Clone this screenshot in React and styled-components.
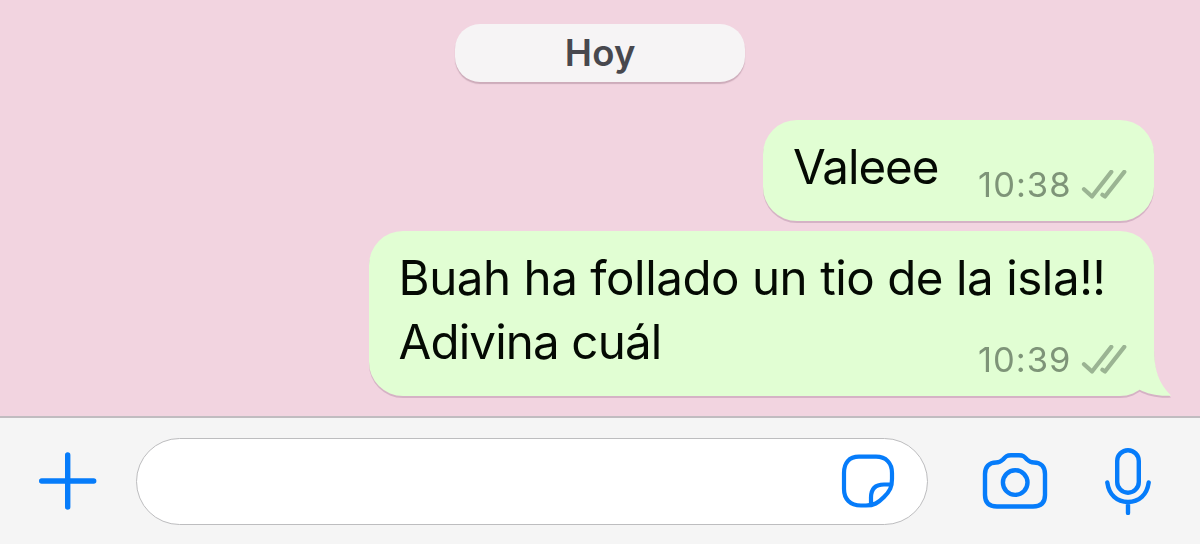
import React from "react";
import styled, { createGlobalStyle } from "styled-components";

const GlobalStyle = createGlobalStyle`
  * { box-sizing: border-box; }
  body { margin: 0; }
`;

const Screen = styled.div`
  width: 1200px;
  height: 544px;
  display: flex;
  flex-direction: column;
  overflow: hidden;
  background: #f2d4e0;
  font-family: Inter, "Liberation Sans", sans-serif;
`;

const Messages = styled.main`
  flex: 1;
  display: flex;
  flex-direction: column;
  align-items: flex-end;
  padding: 24px 46px 0 0;
`;

const DayPill = styled.div`
  align-self: center;
  width: 290px;
  height: 58px;
  margin: 0 -46.5px 38px 0;
  border-radius: 25px;
  background: #f6f4f5;
  box-shadow: 0 2px 1px rgba(120, 80, 100, 0.3);
  color: #48484e;
  font-size: 36.5px;
  font-weight: 600;
  line-height: 59px;
  letter-spacing: 0.2px;
  text-align: center;
`;

const Bubble = styled.article`
  position: relative;
  display: flex;
  align-items: flex-end;
  justify-content: space-between;
  width: ${(p) => p.$width}px;
  height: ${(p) => p.$height}px;
  margin-bottom: 10px;
  padding: 0 27.5px 0 30px;
  border-radius: 34px;
  background: #e1fed3;
  filter: drop-shadow(0 2px 0.7px rgba(130, 80, 120, 0.26));
`;

const Text = styled.p`
  align-self: flex-start;
  margin: 15px 0 0;
  color: #040a03;
  font-size: 47.5px;
  line-height: 64px;
  white-space: nowrap;
`;

const Line = styled.span`
  display: block;
  letter-spacing: ${(p) => p.$tracking}px;
`;

const Meta = styled.div`
  display: flex;
  align-items: center;
  gap: 9px;
  margin: 0 0 14px ${(p) => p.$pull || 0}px;
  color: #7e9478;
  font-size: 34.5px;
  line-height: 44px;
  letter-spacing: 1px;
`;

const Tail = styled.svg`
  position: absolute;
  right: -17px;
  bottom: 0;
`;

const Toolbar = styled.footer`
  display: flex;
  align-items: center;
  height: 128px;
  padding: 0 47px 0 38px;
  border-top: 2px solid #c1bcc0;
  background: #f5f5f5;
`;

const Field = styled.div`
  display: flex;
  align-items: center;
  justify-content: flex-end;
  width: 792px;
  height: 87px;
  margin: 0 54px 0 38px;
  padding-right: 32px;
  border: 1px solid #bdbdbf;
  border-radius: 44px;
  background: #fff;
`;

const Icon = styled.svg`
  display: block;
  flex: none;
  fill: none;
  stroke: #067cfa;
  stroke-width: ${(p) => p.$stroke || 5};
  stroke-linecap: round;
  stroke-linejoin: round;
`;

const CameraSlot = styled.div`
  margin-right: 56px;
`;

function Checks() {
  return (
    <svg width="46" height="30" viewBox="0 0 46 30" fill="none" stroke="#9bb493" strokeWidth="4.2" strokeLinecap="round" strokeLinejoin="round">
      <path d="M3 19.2 11 26.5 30.3 1.9M21.4 24.8 24 26.5 43.3 1.9" />
    </svg>
  );
}

export default function App() {
  return (
    <>
      <GlobalStyle />
      <Screen>
        <Messages>
          <DayPill>Hoy</DayPill>
          <Bubble $width={391} $height={101}>
            <Text><Line $tracking={-1.05}>Valeee</Line></Text>
            <Meta><span>10:38</span><Checks /></Meta>
          </Bubble>
          <Bubble $width={785.5} $height={165}>
            <Text>
              <Line $tracking={-0.45}>Buah ha follado un tio de la isla!!</Line>
              <Line $tracking={-0.85}>Adivina cuál</Line>
            </Text>
            <Meta $pull={-200}><span>10:39</span><Checks /></Meta>
            <Tail width="34" height="48" viewBox="0 0 34 48">
              <path d="M0 8 17 0C17 22 22 36 34 47.6 22 48.5 10 46 2.5 41.5Z" fill="#e1fed3" />
            </Tail>
          </Bubble>
        </Messages>
        <Toolbar>
          <Icon width="60" height="60" viewBox="0 0 60 60" $stroke={5.4}>
            <path d="M29.7 4V56M3.7 30H55.7" />
          </Icon>
          <Field>
            <Icon width="54" height="54" viewBox="0 0 54 54" $stroke={4.2}>
              <path d="M18 2.7H35C45 2.7 51 9 51 19V25C51 33 49 37 43 43 37 49 33 51.5 25 51.5H20C9 51.5 3 45 3 35V19C3 9 8 2.7 18 2.7Z" />
              <path d="M50 30.5H43C34 30.5 30 35 30 43.5V50" />
            </Icon>
          </Field>
          <CameraSlot>
            <Icon width="66" height="58" viewBox="0 0 66 58" $stroke={4.4}>
              <path d="M14 10.5C18 10.5 19 9.5 21 7.5 24 4 25 3.3 29 3.3H37C41 3.3 42 4 45 7.5 47 9.5 48 10.5 52 10.5 59 10.5 63 15 63 22V43C63 50.5 59 54.5 51 54.5H15C7 54.5 3 50.5 3 43V22C3 15 7 10.5 14 10.5Z" />
              <circle cx="33.2" cy="30.6" r="12.3" />
            </Icon>
          </CameraSlot>
          <Icon width="48" height="68" viewBox="0 0 48 68" $stroke={4.4}>
            <rect x="13.2" y="3.2" width="21.6" height="42.5" rx="10.8" />
            <path d="M3.3 35.5C5 48 13 55 24 55S43 48 44.7 35.5M24 55V66" />
          </Icon>
        </Toolbar>
      </Screen>
    </>
  );
}
